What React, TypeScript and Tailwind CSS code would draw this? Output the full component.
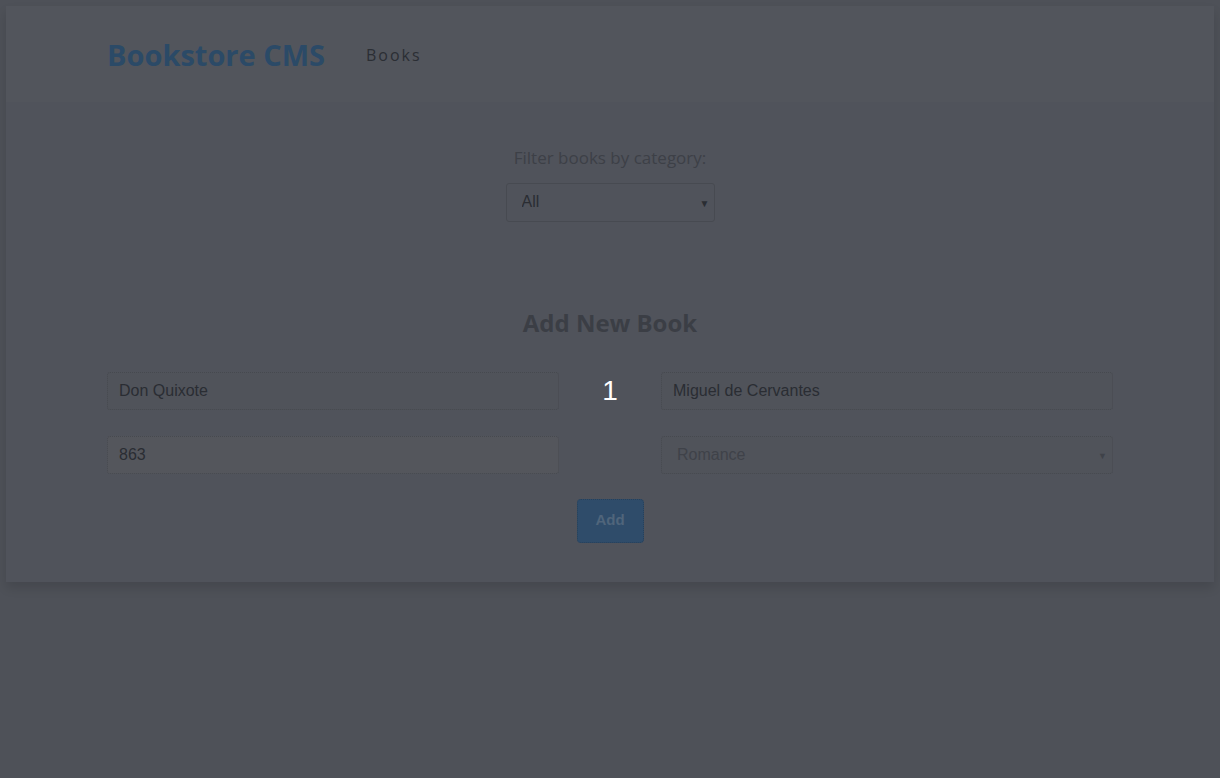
import { useState } from "react";

const categories = ["All", "Action", "Biography", "History", "Horror", "Kids", "Learning", "Sci-Fi", "Romance"];

function Header() {
  return (
    <header className="flex h-[96px] items-center bg-[#52555c] px-[101px]">
      <h1 className="text-[29px] font-bold leading-none text-[#2b4a67] [font-family:'Open_Sans',sans-serif]">
        Bookstore CMS
      </h1>
      <nav className="ml-[41px] mt-[2px] text-[16px] tracking-[2px] text-[#2b2e34] [font-family:'Open_Sans',sans-serif]">
        Books
      </nav>
    </header>
  );
}

function Filter() {
  const [category, setCategory] = useState("All");
  return (
    <section className="flex flex-col items-center pt-[43px]">
      <label className="text-[17px] text-[#3d4047] [font-family:'Open_Sans',sans-serif]">Filter books by category:</label>
      <div className="relative mt-[12px] h-[39px] w-[209px] rounded-[3px] border border-[#474a51]">
        <select
          value={category}
          onChange={(e) => setCategory(e.target.value)}
          className="h-full w-full appearance-none bg-transparent pl-[15px] text-[16px] text-[#2a2d33] outline-none [font-family:'Liberation_Sans',sans-serif]"
        >
          {categories.map((c) => (
            <option key={c}>{c}</option>
          ))}
        </select>
        <span className="pointer-events-none absolute right-[4px] top-[12px] text-[10px] text-[#2a2d33]">▼</span>
      </div>
    </section>
  );
}

function AddBook() {
  const [title, setTitle] = useState("Don Quixote");
  const [author, setAuthor] = useState("Miguel de Cervantes");
  const [pages, setPages] = useState("863");
  const input =
    "h-[38px] w-full rounded-[3px] border border-dotted border-[#46494f] px-[11px] text-[16px] text-[#2a2d33] outline-none [font-family:'Liberation_Sans',sans-serif]";
  return (
    <section className="flex flex-col items-center px-[101px] pt-[83px]">
      <h2 className="text-[24px] font-bold text-[#3b3e45] [font-family:'Open_Sans',sans-serif]">Add New Book</h2>
      <form className="mt-[31px] grid w-full grid-cols-[1fr_102px_1fr] gap-y-[26px]">
        <input value={title} onChange={(e) => setTitle(e.target.value)} className={`${input} bg-[#50535a]`} />
        <div className="flex items-center justify-center text-[28px] leading-none text-white [font-family:'Liberation_Sans',sans-serif]">1</div>
        <input value={author} onChange={(e) => setAuthor(e.target.value)} className={`${input} bg-[#50535a]`} />
        <input value={pages} onChange={(e) => setPages(e.target.value)} className={`${input} bg-[#54565c]`} />
        <div />
        <div className="relative">
          <select defaultValue="Romance" className={`${input} appearance-none bg-[#50535a] pl-[15px] text-[#3f4249]`}>
            {categories.slice(1).map((c) => (
              <option key={c}>{c}</option>
            ))}
          </select>
          <span className="pointer-events-none absolute right-[6px] top-[13px] text-[9px] text-[#3f4249]">▼</span>
        </div>
        <div className="col-span-3 flex justify-center">
          <button
            type="button"
            className="-mt-[1px] h-[44px] w-[67px] rounded-[4px] border border-dotted border-[#26405a] bg-[#2f4c6a] text-[15px] font-bold text-[#50657b] [font-family:'Liberation_Sans',sans-serif]"
          >
            Add
          </button>
        </div>
      </form>
    </section>
  );
}

export default function App() {
  return (
    <div className="min-h-[778px] bg-[#4e5158] p-[6px]">
      <main className="h-[576px] bg-[#50535b] shadow-[0_6px_10px_rgba(0,0,0,0.12)]">
        <Header />
        <Filter />
        <AddBook />
      </main>
    </div>
  );
}
